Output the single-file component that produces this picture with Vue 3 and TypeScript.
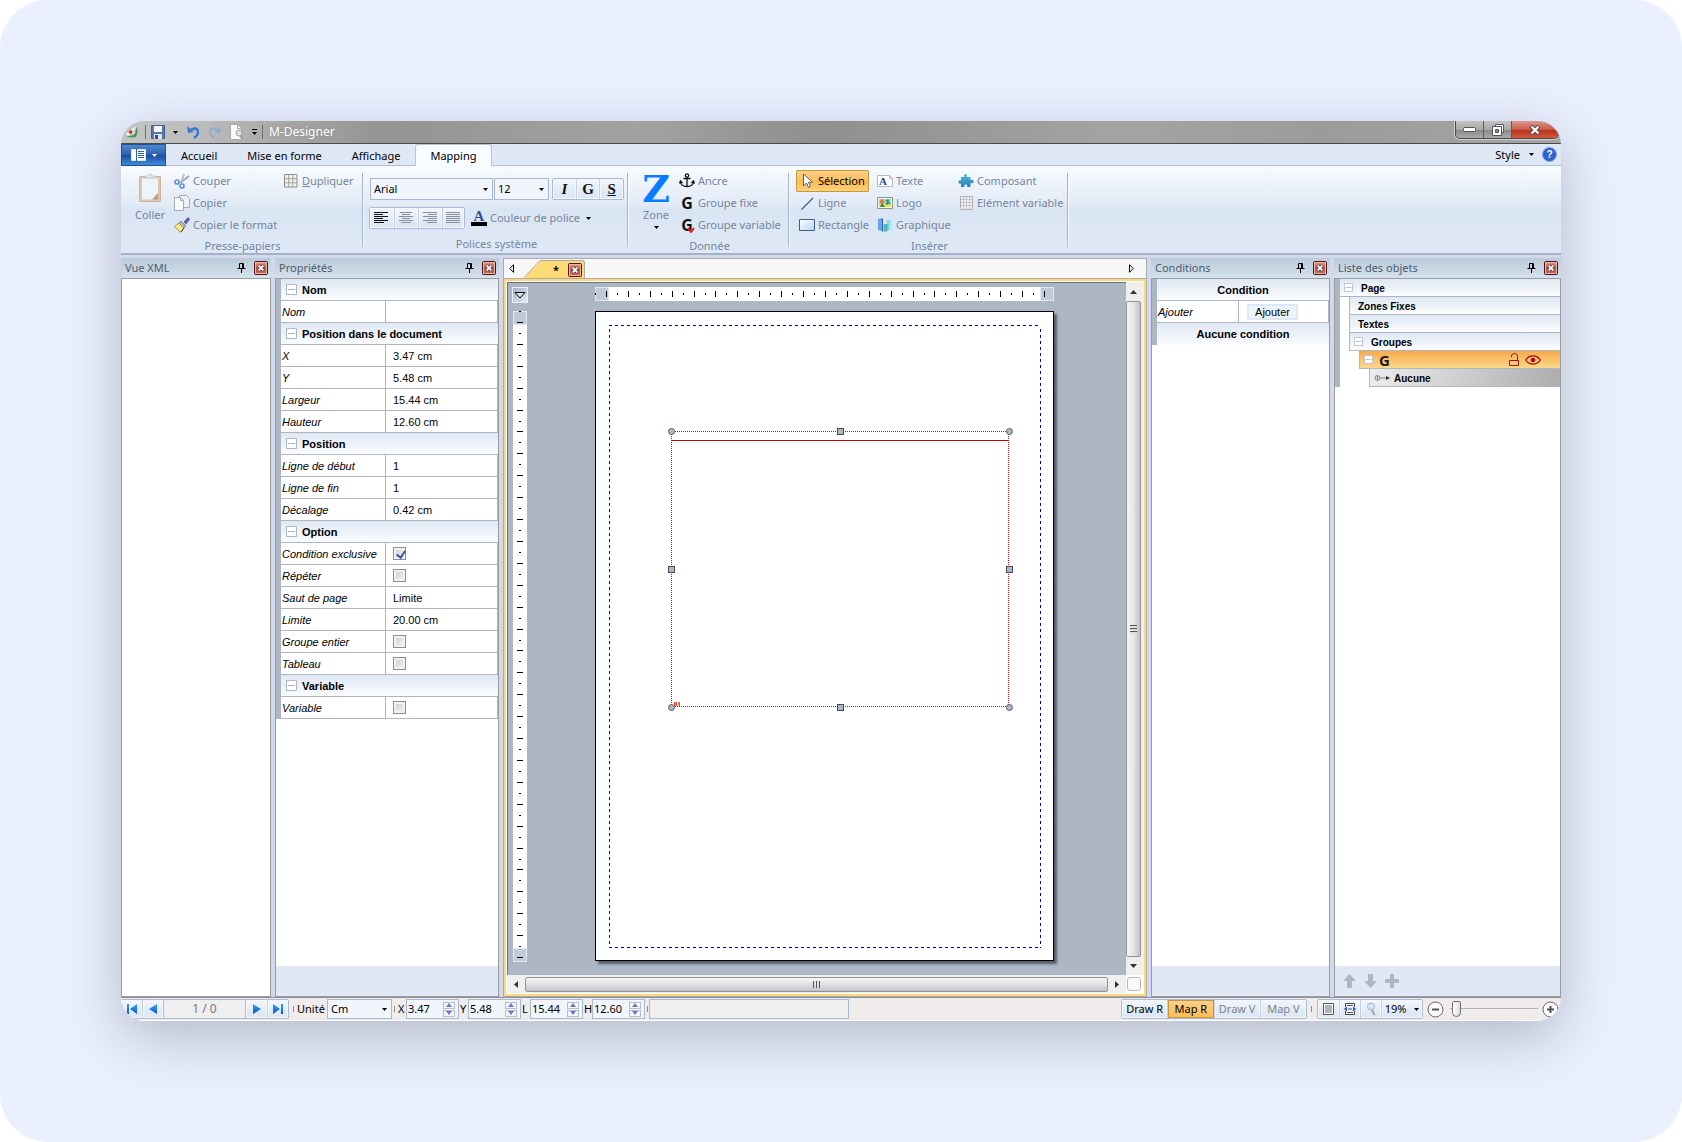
<script setup lang="ts">
import { ref } from 'vue'

interface RibbonItem { label: string; icon?: string; glyph?: string; active?: boolean; key?: boolean }
interface Row { kind: 'head' | 'text' | 'check' | 'select'; label: string; value?: string; checked?: boolean }

const tabs = ['Accueil', 'Mise en forme', 'Affichage', 'Mapping']
const activeTab = ref('Mapping')

const clipboard: RibbonItem[] = [
  { label: 'Couper', icon: 'cut' },
  { label: 'Copier', icon: 'copy' },
  { label: 'Copier le format', icon: 'brush' },
]
const data: RibbonItem[] = [
  { label: 'Ancre', icon: 'anchor' },
  { label: 'Groupe fixe', glyph: 'G' },
  { label: 'Groupe variable', glyph: 'G', key: true },
]
const insertColumns: RibbonItem[][] = [
  [
    { label: 'Sélection', icon: 'cursor', active: true },
    { label: 'Ligne', icon: 'line' },
    { label: 'Rectangle', icon: 'rect' },
  ],
  [
    { label: 'Texte', icon: 'text' },
    { label: 'Logo', icon: 'logo' },
    { label: 'Graphique', icon: 'chart' },
  ],
  [
    { label: 'Composant', icon: 'puzzle' },
    { label: 'Elément variable', icon: 'table' },
  ],
]
const aligns = ['left', 'center', 'right', 'justify']
const alignLines: Record<string, [number, number][]> = {
  left: [[0, 14], [0, 9], [0, 14], [0, 9], [0, 14], [0, 10]],
  center: [[1, 13], [3, 11], [0, 14], [3, 11], [0, 14], [2, 12]],
  right: [[0, 14], [5, 14], [0, 14], [5, 14], [0, 14], [4, 14]],
  justify: [[0, 14], [0, 14], [0, 14], [0, 14], [0, 14], [0, 14]],
}

const rows = ref<Row[]>([
  { kind: 'head', label: 'Nom' },
  { kind: 'text', label: 'Nom', value: '' },
  { kind: 'head', label: 'Position dans le document' },
  { kind: 'text', label: 'X', value: '3.47 cm' },
  { kind: 'text', label: 'Y', value: '5.48 cm' },
  { kind: 'text', label: 'Largeur', value: '15.44 cm' },
  { kind: 'text', label: 'Hauteur', value: '12.60 cm' },
  { kind: 'head', label: 'Position' },
  { kind: 'text', label: 'Ligne de début', value: '1' },
  { kind: 'text', label: 'Ligne de fin', value: '1' },
  { kind: 'text', label: 'Décalage', value: '0.42 cm' },
  { kind: 'head', label: 'Option' },
  { kind: 'check', label: 'Condition exclusive', checked: true },
  { kind: 'check', label: 'Répéter', checked: false },
  { kind: 'select', label: 'Saut de page', value: 'Limite' },
  { kind: 'text', label: 'Limite', value: '20.00 cm' },
  { kind: 'check', label: 'Groupe entier', checked: false },
  { kind: 'check', label: 'Tableau', checked: false },
  { kind: 'head', label: 'Variable' },
  { kind: 'check', label: 'Variable', checked: false },
])

const halfCm = 10.95
const ticks = (n: number) =>
  Array.from({ length: n }, (_, i) => ({ at: Math.round(i * halfCm), major: i % 2 === 1 }))
const hTicks = ticks(42)
const vTicks = ticks(60)

const coords = ref([
  { label: 'X', value: '3.47' },
  { label: 'Y', value: '5.48' },
  { label: 'L', value: '15.44' },
  { label: 'H', value: '12.60' },
])
const modes = ['Draw R', 'Map R', 'Draw V', 'Map V']
const mode = ref('Map R')
const corners = [[76, 120], [414, 120], [76, 396], [414, 396]]
const edges = [[245, 120], [245, 396], [76, 258], [414, 258]]
</script>

<template>
  <svg class="defs" aria-hidden="true">
    <defs>
      <linearGradient id="g-play" x1="0" y1="0" x2="0" y2="1"><stop offset="0" stop-color="#3aa0f5" /><stop offset="1" stop-color="#0a55c8" /></linearGradient>
      <linearGradient id="g-rect" x1="0" y1="0" x2="1" y2="1"><stop offset="0" stop-color="#fff" /><stop offset="1" stop-color="#b9d5ee" /></linearGradient>
      <linearGradient id="g-puz" x1="0" y1="0" x2="0" y2="1"><stop offset="0" stop-color="#56b9dc" /><stop offset="1" stop-color="#2a80b8" /></linearGradient>
      <linearGradient id="g-close" x1="0" y1="0" x2="0" y2="1"><stop offset="0" stop-color="#e4a595" /><stop offset=".5" stop-color="#c3503a" /><stop offset="1" stop-color="#c96a55" /></linearGradient>
    </defs>
    <symbol id="pin" viewBox="0 0 9 10"><path d="M2.500 .5h4v5h-4zM5.500 1v4.500M.5 5.500h8M4.500 6v4" fill="none" stroke="#000" /></symbol>
    <symbol id="close" viewBox="0 0 14 14">
      <rect x=".5" y=".5" width="13" height="13" rx="1" fill="url(#g-close)" stroke="#4f1220" />
      <rect x="1.500" y="1.500" width="11" height="11" fill="none" stroke="#eab5a6" />
      <path d="M4.500 4.500l5 5M9.500 4.500l-5 5" stroke="#4b4b58" stroke-width="3.600" /><path d="M4.700 4.700l4.600 4.600M9.300 4.700l-4.600 4.600" stroke="#fff" stroke-width="1.800" />
    </symbol>
    <symbol id="down" viewBox="0 0 5 3"><path d="M0 0h5L2.500 3z" fill="#000" /></symbol>
    <symbol id="minus" viewBox="0 0 11 11"><path d="M.5 .5h10v10h-10z" fill="#fff" stroke="#adb6c4" /><path d="M2 5.500h7" stroke="#adb6c4" /></symbol>
    <symbol id="cut" viewBox="0 0 16 16">
      <path d="M10 1L7 10M15 3L6 10" stroke="#9aa5b5" stroke-width="1.800" /><path d="M10 1L7.500 9" stroke="#d5dbe3" stroke-width=".7" />
      <circle cx="3" cy="9" r="2" fill="none" stroke="#6d93cf" stroke-width="1.700" /><circle cx="8" cy="13" r="2" fill="none" stroke="#6d93cf" stroke-width="1.700" />
    </symbol>
    <symbol id="copy" viewBox="0 0 16 16">
      <path d="M5.500 .5h7l3 3v9h-10z" fill="#eef0f2" stroke="#a5aab0" /><path d="M.5 2.500h6l3 3v10h-9z" fill="#f9fafb" stroke="#a5aab0" /><path d="M6.500 2.500v3h3" fill="none" stroke="#a5aab0" />
    </symbol>
    <symbol id="brush" viewBox="0 0 16 16">
      <path d="M10 5l4-4.500 1.700 1.700L12 7z" fill="#5964b8" stroke="#39406f" stroke-width=".6" /><path d="M7 4l5 5-2 2-5-5z" fill="#b5b8c0" stroke="#62656e" stroke-width=".7" />
      <path d="M5 6l5 5-3.500 4.500L.5 9.500z" fill="#f5e27a" stroke="#a58a2c" stroke-width=".8" /><path d="M2.500 9.500l5 4M4 8l4.500 4" stroke="#fff8cc" /><path d="M7 15l3-4" stroke="#4b3b12" />
    </symbol>
    <symbol id="grid" viewBox="0 0 14 14"><path d="M.5 .5h12.500v12.500h-12.500z" fill="#f3f2ee" stroke="#8d8d88" /><path d="M4.700 1v12M8.800 1v12M1 4.700h12M1 8.800h12" stroke="#a2a29c" /></symbol>
    <symbol id="anchor" viewBox="0 0 16 16"><circle cx="8" cy="2.500" r="1.700" fill="none" stroke="#111" stroke-width="1.200" /><path d="M8 4v10M4.500 5.500h7M1.500 9C2 12 5 13.500 8 13.500S14 12 14.500 9M.5 10.500l1-2.500 2 2M15.500 10.500l-1-2.500-2 2" fill="none" stroke="#111" stroke-width="1.300" /></symbol>
    <symbol id="cursor" viewBox="0 0 16 16"><path d="M4.500 1v12l3-3 2 4.500 2-1-2-4.200h4z" fill="#fff" stroke="#4f5e7c" /></symbol>
    <symbol id="line" viewBox="0 0 16 16"><path d="M2.500 14.500L14 3" stroke="#3d6089" stroke-width="1.300" /></symbol>
    <symbol id="rect" viewBox="0 0 16 16"><path d="M.5 2.500h15v11H.5z" fill="url(#g-rect)" stroke="#3d6089" /></symbol>
    <symbol id="textpage" viewBox="0 0 16 16"><path d="M.5 2.500h12l3 3v8H.5z" fill="#fdfdfd" stroke="#b5bac2" /><path d="M12.500 2.500v3h3" fill="none" stroke="#b5bac2" /></symbol>
    <symbol id="logo" viewBox="0 0 16 16">
      <path d="M.5 2.500h15v11H.5z" fill="#f4f4f0" stroke="#8f9490" /><path d="M2 4h12v8H2z" fill="#a3d0f3" /><path d="M2 12v-2l3-1 4 1 5-1v3z" fill="#f0e24c" />
      <circle cx="5" cy="6.500" r="2.300" fill="#e8792d" /><path d="M3 12l2-4 3 4z" fill="#2c8a32" /><path d="M9 5l4 4M12 5l-3 4M10.500 4.500v5" stroke="#3a9a3f" stroke-width="1.400" />
    </symbol>
    <symbol id="chart" viewBox="0 0 16 16">
      <path d="M1 2l4-1v13l-4-1z" fill="#6aa3ee" /><path d="M5 1l1 1v13l-1-1z" fill="#2a5fb8" /><path d="M6.500 7h3v7l-3 1z" fill="#45c3b0" /><path d="M9.500 7l1 .5V14l-1 .5z" fill="#17806f" /><path d="M10.500 3l4-1v11l-4 1z" fill="#9ae9f3" /><path d="M11 3v10" stroke="#4cbad0" />
    </symbol>
    <symbol id="puzzle" viewBox="0 0 16 16"><path d="M3 4h3.500C4.500 0 10.500 0 8.500 4H12.500v3C17 5.500 17 11.500 12.500 10v4H9C10.500 10.500 5 10.500 6.500 14H3v-3.500C-.5 12 -.5 6 3 7.500z" fill="url(#g-puz)" /></symbol>
    <symbol id="table" viewBox="0 0 16 16"><path d="M2.500 1.500h12v13h-12z" fill="#f5f4f6" stroke="#aeb0b8" /><path d="M5.500 2v12M8.500 2v12M11.500 2v12M3 4.500h11M3 7.500h11M3 10.500h11" stroke="#c6c2cc" /></symbol>
  </svg>

  <div class="stage">
    <main class="window">
      <header class="titlebar">
        <svg class="app-logo" width="20" height="22" viewBox="0 0 20 22"><path d="M3 13L14 4l2 2-9 11c-2 1-5 0-4-4z" fill="#e9efe9" stroke="#8ba592" stroke-width=".6" /><path d="M2 15c3 0 8 2 12-2l2-8c2 4 1 9-1 12-4 1-9 0-13-2z" fill="#3f9b62" /><path d="M5 12l6-5 3 5-4 2z" fill="#dfe8df" /><circle cx="9" cy="11" r="2.200" fill="#d8232e" /></svg>
        <i class="tsep"></i>
        <button class="quick save" aria-label="Enregistrer"><svg width="14" height="14" viewBox="0 0 14 14"><path d="M.5 .5h13v13H.5z" fill="#5878ad" stroke="#42608f" /><path d="M3 1h8v6H3z" fill="#f5f7fa" /><path d="M3 9h8v5H3z" fill="#dfe5ee" /><path d="M4 10h3v4H4z" fill="#36507c" /></svg></button>
        <button class="quick" aria-label="Options"><svg width="5" height="3"><use href="#down" /></svg></button>
        <button class="quick" aria-label="Annuler"><svg width="14" height="14" viewBox="0 0 14 14"><path d="M1 1l1 7 6-1z" fill="#3c76d2" /><path d="M4 6c3-4 8-3 8 1 0 2-1 4-4 6" fill="none" stroke="#3c76d2" stroke-width="2.400" /></svg></button>
        <button class="quick" aria-label="Rétablir"><svg width="14" height="14" viewBox="0 0 14 14"><path d="M13 1l-1 7-6-1z" fill="#93abcb" /><path d="M10 6C7 2 2 3 2 7c0 2 1 4 4 6" fill="none" stroke="#93abcb" stroke-width="2.200" /></svg></button>
        <button class="quick" aria-label="Aperçu"><svg width="14" height="16" viewBox="0 0 14 16"><path d="M.5 .5h7l4 4v11H.5z" fill="#fafafa" stroke="#aaa" /><path d="M7.500 .5v4h4" fill="none" stroke="#aaa" /><circle cx="9" cy="9" r="3" fill="#d9e2ea" stroke="#9aa3ab" /><path d="M10 12l3 3" stroke="#9aa3ab" stroke-width="2" /></svg></button>
        <button class="quick last" aria-label="Personnaliser"><svg width="5" height="7" viewBox="0 0 5 7"><path d="M0 .5h5" stroke="#000" /><path d="M0 3h5L2.500 6z" fill="#000" /></svg></button>
        <i class="tsep"></i>
        <h1>M-Designer</h1>
        <div class="winctl">
          <button aria-label="Réduire"><svg width="13" height="6" viewBox="0 0 13 6"><rect x=".5" y=".5" width="12" height="4" rx="1" fill="#fff" stroke="#50555c" /></svg></button>
          <button aria-label="Restaurer"><svg width="12" height="12" viewBox="0 0 12 12"><path d="M3.500 .5h8v8h-2v-6h-6z" fill="#fff" stroke="#50555c" /><path d="M.5 2.500h9v9h-9z" fill="#fff" stroke="#50555c" /><path d="M3.500 5.500h3v3h-3z" fill="#888" stroke="#50555c" /></svg></button>
          <button class="x" aria-label="Fermer"><svg width="12" height="10" viewBox="0 0 12 10"><path d="M2 1l8 8M10 1L2 9" stroke="#5a3a45" stroke-width="4" /><path d="M2.500 1.500l7 7M9.500 1.500l-7 7" stroke="#fff" stroke-width="2.300" /></svg></button>
        </div>
      </header>

      <nav class="tabs">
        <button class="menu" aria-label="Menu"><svg width="15" height="12" viewBox="0 0 15 12"><path d="M.5 .5h14v11H.5z" fill="#fff" stroke="#dce8f8" /><path d="M5.500 0v12" stroke="#2a60b0" /><path d="M7 2.500h6M7 4.500h6M7 6.500h6M7 8.500h6" stroke="#2a60b0" /></svg><svg width="5" height="3"><use href="#down" /></svg></button>
        <button v-for="t in tabs" :key="t" class="tab" :class="{ on: t === activeTab }" @click="activeTab = t">{{ t }}</button>
        <button class="style">Style<svg width="5" height="3"><use href="#down" /></svg></button>
        <button class="help" aria-label="Aide"><span>?</span></button>
      </nav>

      <section class="ribbon">
        <div class="group g-clip">
          <div class="body">
            <button class="big"><svg width="24" height="30" viewBox="0 0 24 30"><path d="M1.500 3.500h21v25h-21z" fill="#dcc6b6" stroke="#cdb3a0" /><path d="M4 5.500h16v17l-4 4H4z" fill="#eef4fa" /><path d="M20 20v6.500h-6z" fill="#c39a80" /><path d="M7 5V3h3c0-3 4-3 4 0h3v2z" fill="#e4eaf0" stroke="#b6bec8" stroke-width=".6" /></svg><span>Coller</span></button>
            <div class="col c109"><button v-for="i in clipboard" :key="i.label" class="item"><svg width="16" height="16"><use :href="'#' + i.icon" /></svg>{{ i.label }}</button></div>
            <div class="col"><button class="item"><span class="cell"><svg width="14" height="14"><use href="#grid" /></svg></span><span><u>D</u>upliquer</span></button></div>
          </div>
          <h2>Presse-papiers</h2>
        </div>
        <div class="group g-font">
          <div class="fontrows">
            <div class="frow">
              <span class="combo w124"><select aria-label="Police"><option>Arial</option></select><svg width="5" height="3"><use href="#down" /></svg></span>
              <span class="combo w55"><select aria-label="Taille"><option>12</option></select><svg width="5" height="3"><use href="#down" /></svg></span>
              <span class="seg igs"><button><i>I</i></button><button><b>G</b></button><button><u>S</u></button></span>
            </div>
            <div class="frow">
              <span class="seg al"><button v-for="a in aligns" :key="a" :aria-label="a"><svg width="14" height="12" viewBox="0 0 14 12"><path v-for="(l, n) in alignLines[a]" :key="n" :d="`M${l[0]} ${n * 2 + .5}H${l[1]}`" :stroke="a === 'left' ? '#111' : '#8b8e96'" /></svg></button></span>
              <button class="fcolor"><span class="fa">A</span>Couleur de police<svg width="5" height="3"><use href="#down" /></svg></button>
            </div>
          </div>
          <h2>Polices système</h2>
        </div>
        <div class="group g-data">
          <div class="body">
            <button class="big zone"><span class="z">Z</span><span>Zone</span><svg width="5" height="3"><use href="#down" /></svg></button>
            <div class="col"><button v-for="i in data" :key="i.label" class="item"><svg v-if="i.icon" width="16" height="16"><use :href="'#' + i.icon" /></svg><span v-else class="cell gl">{{ i.glyph }}<svg v-if="i.key" class="chk" width="8" height="6" viewBox="0 0 8 6"><path d="M1 1l3 4 3-4" fill="none" stroke="#f01818" stroke-width="2" /></svg></span>{{ i.label }}</button></div>
          </div>
          <h2>Donnée</h2>
        </div>
        <div class="group g-ins">
          <div class="body">
            <div v-for="(c, n) in insertColumns" :key="n" class="col">
              <button v-for="i in c" :key="i.label" class="item" :class="{ on: i.active }">
                <span v-if="i.icon === 'text'" class="cell pg"><svg width="16" height="16"><use href="#textpage" /></svg><b>A</b></span>
                <svg v-else width="16" height="16"><use :href="'#' + i.icon" /></svg>{{ i.label }}</button>
            </div>
          </div>
          <h2>Insérer</h2>
        </div>
      </section>

      <section class="work">
        <aside class="panel p-xml">
          <header><h3>Vue XML</h3><button aria-label="Épingler"><svg width="9" height="10"><use href="#pin" /></svg></button><button aria-label="Fermer"><svg width="14" height="14"><use href="#close" /></svg></button></header>
          <div class="content"></div>
        </aside>

        <aside class="panel p-prop">
          <header><h3>Propriétés</h3><button aria-label="Épingler"><svg width="9" height="10"><use href="#pin" /></svg></button><button aria-label="Fermer"><svg width="14" height="14"><use href="#close" /></svg></button></header>
          <div class="content">
            <table class="props">
              <colgroup><col class="c-name"><col></colgroup>
              <tbody>
                <tr v-for="(r, n) in rows" :key="n">
                  <th v-if="r.kind === 'head'" colspan="2"><div class="hd"><button aria-label="Réduire la section"><svg width="11" height="11"><use href="#minus" /></svg></button>{{ r.label }}</div></th>
                  <template v-else>
                    <td class="nm"><label :for="'p' + n">{{ r.label }}</label></td>
                    <td class="vl">
                      <input v-if="r.kind === 'check'" :id="'p' + n" v-model="r.checked" type="checkbox">
                      <select v-else-if="r.kind === 'select'" :id="'p' + n"><option>{{ r.value }}</option></select>
                      <input v-else :id="'p' + n" v-model="r.value" type="text">
                    </td>
                  </template>
                </tr>
              </tbody>
            </table>
            <footer></footer>
          </div>
        </aside>

        <section class="doc">
          <div class="doctabs">
            <button aria-label="Précédent"><svg width="5" height="9" viewBox="0 0 5 9"><path d="M4.500 .7v7.600L.7 4.500z" fill="none" stroke="#000" /></svg></button>
            <div class="doctab"><svg class="slope" width="18" height="18" viewBox="0 0 18 18"><path d="M0 18L16 1h2v17z" fill="#ffdb78" /><path d="M0 17.500L16 .5h2" fill="none" stroke="#aaa" /></svg><span>*</span><button aria-label="Fermer"><svg width="14" height="14"><use href="#close" /></svg></button></div>
            <button class="next" aria-label="Suivant"><svg width="5" height="9" viewBox="0 0 5 9"><path d="M.5 .7v7.600L4.300 4.500z" fill="none" stroke="#000" /></svg></button>
          </div>
          <div class="frame">
            <div class="canvas">
              <button class="corner" aria-label="Règles"><svg width="12" height="7" viewBox="0 0 12 7"><path d="M1 .5h10L6 6z" fill="#dfe3e6" stroke="#000" /></svg></button>
              <svg class="hruler" width="459" height="14"><path d="M0 0h459v14H0z" fill="#fff" /><path d="M.5 .5h13v13H.5zM445.500 .5h13v13h-13z" fill="#c0cad8" stroke="#dfe9f6" /><path v-for="t in hTicks" :key="t.at" :d="t.major ? `M${t.at + .5} 4v6` : `M${t.at + .5} 6v2`" stroke="#000" /></svg>
              <svg class="vruler" width="14" height="651"><path d="M0 0h14v651H0z" fill="#fff" /><path d="M.5 .5h13v13H.5zM.5 637.500h13v13H.5z" fill="#c0cad8" stroke="#dfe9f6" /><path v-for="t in vTicks" :key="t.at" :d="t.major ? `M4 ${t.at + .5}h6` : `M6 ${t.at + .5}h2`" stroke="#000" /></svg>
              <svg class="page" width="459" height="650">
                <rect x=".5" y=".5" width="458" height="649" fill="#fff" stroke="#000" />
                <path d="M14 14.500H446M14 636.500H446M14.500 18V637M445.500 18V637" stroke="#0000c0" stroke-dasharray="3 3" />
                <path d="M76 120.500H414M76 395.500H414M76.500 121V396M413.500 121V396" stroke="#f00000" stroke-dasharray="1 1" />
                <path d="M77 129.500h336" stroke="#c80000" />
                <circle v-for="(c, n) in corners" :key="'c' + n" :cx="c[0] + .5" :cy="c[1] + .5" r="3" fill="#adb6c3" stroke="#58606c" />
                <rect v-for="(c, n) in edges" :key="'e' + n" :x="c[0] - 2.500" :y="c[1] - 2.500" width="6" height="6" fill="#adb6c3" stroke="#434d5a" />
                <path d="M79.500 391v4M81.500 391v4M84.500 391v4" stroke="#f33" /><path d="M80.500 391v4M83.500 391v4" stroke="#fb8" />
              </svg>
            </div>
            <div class="vbar"><button aria-label="Haut"><svg width="7" height="4" viewBox="0 0 7 4"><path d="M0 4h7L3.500 0z" fill="#333" /></svg></button><div class="thumb"><i></i><i></i><i></i></div><button aria-label="Bas"><svg width="7" height="4" viewBox="0 0 7 4"><path d="M0 0h7L3.500 4z" fill="#333" /></svg></button></div>
            <div class="hbar"><button aria-label="Gauche"><svg width="4" height="7" viewBox="0 0 4 7"><path d="M4 0v7L0 3.500z" fill="#333" /></svg></button><div class="thumb"><i></i><i></i><i></i></div><button aria-label="Droite"><svg width="4" height="7" viewBox="0 0 4 7"><path d="M0 0v7l4-3.500z" fill="#333" /></svg></button></div>
            <div class="nub"><button aria-label="Zoom"></button></div>
          </div>
        </section>

        <aside class="panel p-cond">
          <header><h3>Conditions</h3><button aria-label="Épingler"><svg width="9" height="10"><use href="#pin" /></svg></button><button aria-label="Fermer"><svg width="14" height="14"><use href="#close" /></svg></button></header>
          <div class="content">
            <table class="props">
              <colgroup><col class="c-cond"><col></colgroup>
              <tbody>
                <tr><th colspan="2" class="mid">Condition</th></tr>
                <tr><td class="nm">Ajouter</td><td class="vl"><button class="add">Ajouter</button></td></tr>
                <tr class="nb"><th colspan="2" class="mid">Aucune condition</th></tr>
              </tbody>
            </table>
            <footer></footer>
          </div>
        </aside>

        <aside class="panel p-list">
          <header><h3>Liste des objets</h3><button aria-label="Épingler"><svg width="9" height="10"><use href="#pin" /></svg></button><button aria-label="Fermer"><svg width="14" height="14"><use href="#close" /></svg></button></header>
          <div class="content">
            <div class="tree">
              <div class="node top"><svg width="9" height="9"><use href="#minus" /></svg><span>Page</span></div>
              <div class="node l1"><span>Zones Fixes</span></div>
              <div class="node l1"><span>Textes</span></div>
              <div class="node l1 par"><svg width="9" height="9"><use href="#minus" /></svg><span>Groupes</span></div>
              <div class="node l2"><svg width="9" height="9"><use href="#minus" /></svg><b class="gg">G</b>
                <button aria-label="Verrou"><svg width="10" height="13" viewBox="0 0 10 13"><path d="M.5 7.500h9v5h-9zM8.500 7V3C8.500-.2 2.500-.2 2.500 3v1" fill="none" stroke="#a01010" /></svg></button>
                <button aria-label="Visible"><svg width="16" height="10" viewBox="0 0 16 10"><path d="M.8 5C4-.5 12-.5 15.200 5 12 10.500 4 10.500 .8 5z" fill="none" stroke="#a01010" stroke-width="1.300" /><circle cx="8" cy="5" r="2.300" fill="#a01010" /></svg></button>
              </div>
              <div class="node l3"><svg width="16" height="8" viewBox="0 0 16 8"><circle cx="3.500" cy="4" r="2.500" fill="#ddd" stroke="#888" /><path d="M3.500 2v4M6 4h7" stroke="#888" /><path d="M12 2l4 2-4 2z" fill="#333" /></svg><span>Aucune</span></div>
            </div>
            <footer>
              <button aria-label="Monter"><svg width="13" height="14" viewBox="0 0 13 14"><path d="M6.500 0L13 7H9v7H4V7H0z" fill="#adb6c3" /></svg></button>
              <button aria-label="Descendre"><svg width="13" height="14" viewBox="0 0 13 14"><path d="M6.500 14L13 7H9V0H4v7H0z" fill="#adb6c3" /></svg></button>
              <button aria-label="Ajouter un objet"><svg width="14" height="14" viewBox="0 0 14 14"><path d="M5 0h4v5h5v4H9v5H5V9H0V5h5z" fill="#adb6c3" /></svg></button>
            </footer>
          </div>
        </aside>
      </section>

      <footer class="status">
        <div class="seg nav">
          <button aria-label="Première"><svg width="10" height="10" viewBox="0 0 10 10"><path d="M10 0v10L3 5zM0 0h2v10H0z" fill="url(#g-play)" /></svg></button>
          <button aria-label="Page précédente"><svg width="8" height="10" viewBox="0 0 8 10"><path d="M8 0v10L0 5z" fill="url(#g-play)" /></svg></button>
          <output>1 / 0</output>
          <button aria-label="Page suivante"><svg width="8" height="10" viewBox="0 0 8 10"><path d="M0 0v10l8-5z" fill="url(#g-play)" /></svg></button>
          <button aria-label="Dernière"><svg width="10" height="10" viewBox="0 0 10 10"><path d="M0 0v10l7-5zM8 0h2v10H8z" fill="url(#g-play)" /></svg></button>
        </div>
        <i class="ssep"></i>
        <label for="unit">Unité</label>
        <span class="combo unit"><select id="unit"><option>Cm</option></select><svg width="5" height="3"><use href="#down" /></svg></span>
        <i class="ssep"></i>
        <template v-for="c in coords" :key="c.label">
          <label class="cl" :for="'c' + c.label">{{ c.label }}</label>
          <span class="spin"><input :id="'c' + c.label" v-model="c.value" type="text"><span><button aria-label="Plus"><svg width="6" height="4" viewBox="0 0 6 4"><path d="M0 4h6L3 0z" fill="#6a78c8" /></svg></button><button aria-label="Moins"><svg width="6" height="4" viewBox="0 0 6 4"><path d="M0 0h6L3 4z" fill="#6a78c8" /></svg></button></span></span>
        </template>
        <i class="ssep"></i>
        <div class="progress"></div>
        <div class="seg modes"><button v-for="m in modes" :key="m" :class="{ on: m === mode, off: m.endsWith('V') }" @click="mode = m">{{ m }}</button></div>
        <i class="ssep"></i>
        <div class="seg views">
          <button aria-label="Page"><svg width="11" height="12" viewBox="0 0 11 12"><path d="M.5 .5h10v11H.5z" fill="#fff" stroke="#555" /><path d="M2 3h7M2 5h7M2 7h7M2 9h7" stroke="#666" /></svg></button>
          <button aria-label="Largeur"><svg width="12" height="12" viewBox="0 0 12 12"><path d="M1.500 4V.5h9V4M1.500 8v3.500h9V8" fill="#fff" stroke="#444" /><path d="M3 2.500h6M3 9.500h6M4 6h4" stroke="#555" /><path d="M0 6l3-2.500v5zM12 6L9 3.500v5z" fill="#2458d0" /></svg></button>
          <button aria-label="Loupe"><svg width="10" height="14" viewBox="0 0 10 14"><circle cx="5" cy="4.500" r="3.500" fill="#d3e6f8" stroke="#9db6d4" /><path d="M6 8l2.500 5" stroke="#a3a3b3" stroke-width="2" /></svg></button>
          <button class="pct">19%<svg width="5" height="3"><use href="#down" /></svg></button>
        </div>
        <button class="rnd" aria-label="Zoom arrière"><svg width="17" height="17" viewBox="0 0 17 17"><circle cx="8.500" cy="8.500" r="7.500" fill="#fbfbfb" stroke="#666" /><path d="M5 8.500h7" stroke="#555" stroke-width="2" /></svg></button>
        <input class="zoom" type="range" min="0" max="100" value="2" aria-label="Zoom">
        <button class="rnd" aria-label="Zoom avant"><svg width="17" height="17" viewBox="0 0 17 17"><circle cx="8.500" cy="8.500" r="7.500" fill="#fbfbfb" stroke="#666" /><path d="M5 8.500h7M8.500 5v7" stroke="#555" stroke-width="2" /></svg></button>
      </footer>
    </main>
  </div>
</template>

<style>
body { background: #fff; }
</style>

<style scoped>
* { box-sizing: border-box; }
.defs { position: absolute; width: 0; height: 0; }
button, input, select { font: inherit; color: inherit; margin: 0; padding: 0; border: 0; background: none; border-radius: 0; outline: 0; }
select { appearance: none; }
h1, h2, h3 { margin: 0; font-weight: 400; }
svg { flex: none; display: block; }

.stage { min-height: 100vh; padding: 121px; display: flex; background: #ebf0ff; border-radius: 48px; font: 11px/16px "Noto Sans", "Open Sans", sans-serif; color: #000; }
.window { flex: 1; min-width: 0; display: flex; flex-direction: column; border-radius: 24px; overflow: hidden; background: #d3d9ec; box-shadow: 0 16px 56px rgba(50, 55, 80, .3); }

.titlebar { height: 23px; display: flex; align-items: center; background: linear-gradient(90deg, #c4c4c4 0, #bcbcbc 80px, #a8a8a8 160px, #949494 260px, #a2a2a2 520px, #8f8f8f 700px, #a4a4a4 1000px, #9b9b9b 1200px, #a5a5a5 100%); border-bottom: 1px solid #4a4a4e; }
.app-logo { margin-left: 2px; width: 17px; }
.tsep { width: 1px; height: 14px; margin-left: 5px; background: #6d6d6d; }
.quick { margin-left: 8px; }
.quick.save { margin-left: 5px; }
.tsep + h1 { margin-left: 6px; }
h1 { color: #fff; font-size: 12px; line-height: 18px; flex: 1; text-shadow: 0 0 4px #8a8a8a; }
.winctl { display: flex; align-self: flex-start; height: 18px; margin-right: 2px; border: 1px solid #48484c; border-top: 0; border-radius: 0 0 5px 5px; overflow: hidden; box-shadow: 0 0 0 1px #d3d3d3; }
.winctl button { width: 28px; display: flex; align-items: center; justify-content: center; background: linear-gradient(#c2c2c2, #a9a9a9 50%, #868686 50%, #a9a9a9); border-right: 1px solid #5b5b5f; }
.winctl button.x { width: 46px; border: 0; background: linear-gradient(#dc9a8c, #c9594a 50%, #b3301a 50%, #d05a40); }

.tabs { height: 22px; display: flex; background: #dfe8f5; border-bottom: 1px solid #b0c0d8; }
.menu { width: 45px; height: 22px; display: flex; align-items: center; justify-content: center; gap: 6px; background: linear-gradient(#4f86cc, #2a5fb0 50%, #1b4c9c 50%, #3f8bd8); border: 1px solid #234f94; }
.menu svg + svg { filter: invert(1); }
.tab { padding: 1px 14px 0; height: 22px; border: 1px solid transparent; border-bottom: 0; }
.tab.on { background: #f8fbff; border-color: #b4c3da; border-radius: 3px 3px 0 0; }
.style { margin-left: auto; display: flex; align-items: center; gap: 9px; }
.help { margin: 0 5px 0 9px; display: flex; align-items: center; }
.help span { width: 13px; height: 13px; border-radius: 50%; background: #2b62d0; box-shadow: 0 0 0 1px #7e9fd8; color: #fff; font: bold 10px/13px "Liberation Sans", sans-serif; }

.ribbon { height: 89px; display: flex; background: linear-gradient(#f8fbff, #e1eaf6 45%, #dae5f4 50%, #dfe9f6); border-bottom: 2px solid #a5b1c5; color: #76859c; }
.group { position: relative; display: flex; flex-direction: column; padding-top: 4px; }
.group::after { content: ""; position: absolute; right: 0; top: 7px; bottom: 6px; width: 2px; background: linear-gradient(90deg, #a3b4cc 50%, #f6faff 50%); }
.g-clip { width: 243px; }
.g-font { width: 265px; }
.g-data { width: 161px; }
.g-ins { width: 279px; }
.group h2 { text-align: center; font-size: 11px; line-height: 19px; }
.body { height: 66px; display: flex; }
.col { display: flex; flex-direction: column; }
.c109 { width: 109px; }
.g-ins .body { padding-left: 6px; }
.g-ins .col:nth-child(1) { width: 78px; }
.g-ins .col:nth-child(2) { width: 81px; }
.item { height: 22px; padding: 0 4px 0 3px; display: flex; align-items: center; gap: 3px; white-space: nowrap; align-self: flex-start; }
.item.on { color: #000; background: linear-gradient(#fbd08c, #fdbf5c 50%, #fdb94f 50%, #fed47f); box-shadow: inset 0 0 0 1px #c29b3c; border-radius: 2px; }
.cell { width: 16px; height: 16px; display: flex; align-items: center; justify-content: center; position: relative; }
.gl { font: bold 16px/16px "Noto Sans", sans-serif; color: #111; }
.chk { position: absolute; right: 0; bottom: 0; }
.pg b { position: absolute; left: 2px; top: 2px; font: bold 11px/12px "Liberation Serif", serif; color: #2345a0; }
.big { width: 42px; margin-left: 8px; padding-top: 3px; display: flex; flex-direction: column; align-items: center; gap: 4px; }
.zone { width: 40px; margin-left: 7px; gap: 3px; }
.z { font: bold 38px/31px "DejaVu Serif", serif; color: #0a7dff; }
.fontrows { height: 66px; padding: 8px 0 0 6px; display: flex; flex-direction: column; gap: 7px; }
.frow { display: flex; align-items: center; }
.combo { height: 22px; display: flex; align-items: center; background: #f2f6fc; border: 1px solid #a6bad8; color: #000; padding: 0 4px 0 3px; }
.combo select { flex: 1; min-width: 0; }
.w124 { width: 123px; margin-right: 1px; }
.w55 { width: 55px; margin-right: 3px; }
.seg { display: flex; height: 22px; border: 1px solid #a9bbd6; border-radius: 2px; background: linear-gradient(#f5f8fc, #e3ecf7 50%, #dbe6f4); }
.seg button { flex: 1; display: flex; align-items: center; justify-content: center; box-shadow: inset 0 0 0 1px #f3f7fc; }
.seg button + button { border-left: 1px solid #c3d0e2; }
.igs { width: 72px; color: #111; font: bold 15px/16px "Liberation Serif", serif; }
.al { width: 96px; margin-left: -1px; }
.seg.al button { flex: 0 0 24px; padding-right: 2px; }
.seg.al button:last-child { flex: 1; }
.fcolor { display: flex; align-items: center; gap: 3px; margin-left: 6px; white-space: nowrap; }
.fcolor svg { margin-left: 3px; }
.fa { width: 16px; border-bottom: 4px solid #000; font: bold 15px/12px "Liberation Serif", serif; color: #34508c; }

.work { flex: 1; min-height: 0; display: flex; gap: 4px; padding-top: 3px; }
.panel { display: flex; flex-direction: column; }
.p-xml { width: 150px; }
.p-prop { width: 224px; }
.p-cond { width: 179px; }
.p-list { width: 227px; }
.panel > header { height: 20px; padding: 0 3px 0 4px; display: flex; align-items: center; gap: 8px; background: linear-gradient(#bccbd9, #d4e1ef); color: #4d5a68; }
h3 { flex: 1; font-size: 11px; line-height: 20px; }
.content { flex: 1; display: flex; flex-direction: column; background: #fff; border: 1px solid #9c9c9f; font-family: "Liberation Sans", Arial, sans-serif; font-size: 11px; line-height: 14px; color: #000; }
.content footer { height: 30px; margin-top: auto; background: #dfe8f4; display: flex; align-items: center; gap: 8px; padding-left: 8px; }
.props { width: 100%; border-collapse: separate; border-spacing: 0; border-left: 5px solid #adb6c3; table-layout: fixed; }
.c-name { width: 105px; }
.c-cond { width: 82px; }
.props th { height: 22px; padding: 0; text-align: left; background: linear-gradient(#dfe8f4, #fbfcfe); border-bottom: 1px solid #adb6c3; }
.props th.mid { text-align: center; }
.props .nb th { border-bottom: 0; }
.hd { display: flex; align-items: center; gap: 5px; padding-left: 5px; }
.props td { height: 22px; padding: 0; border-bottom: 1px solid #adb6c3; border-right: 1px solid #adb6c3; vertical-align: middle; }
.props td.nm { padding-left: 1px; font-style: italic; white-space: nowrap; }
.props td.vl { padding-left: 7px; }
.vl input[type=text], .vl select { display: block; width: 100%; height: 16px; padding-top: 1px; }
.vl input[type=checkbox] { appearance: none; display: block; width: 13px; height: 13px; border: 1px solid #8c8f94; background: linear-gradient(135deg, #c6cbd2, #f6f6f6); box-shadow: inset 0 0 0 2px #f1f1f1; position: relative; }
.vl input[type=checkbox]:checked::after { content: ""; position: absolute; left: 4px; top: 1px; width: 4px; height: 7px; border: solid #3c56a0; border-width: 0 2px 2px 0; transform: rotate(35deg); }
.add { margin-left: 1px; width: 51px; height: 16px; background: #eef4fc; border: 2px solid #dfe8f5; line-height: 12px; display: block; }

.tree { border-left: 5px solid #adb6c3; font: bold 10px/15px "Liberation Sans", Arial, sans-serif; }
.node { height: 18px; display: flex; align-items: center; gap: 8px; padding-left: 4px; background: linear-gradient(#dfe8f4, #fbfcfe); border-bottom: 1px solid #adb6c3; border-left: 1px solid #adb6c3; }
.node span { padding-top: 2px; }
.top { border-left: 0; }
.l1 { margin-left: 9px; padding-left: 8px; }
.l1.par { padding-left: 4px; }
.l2 { margin-left: 19px; gap: 6px; padding-right: 19px; background: linear-gradient(#f8a94a, #fad98c); }
.l2 .gg { flex: 1; font: bold 15px/16px "Noto Sans", sans-serif; color: #181818; }
.l3 { margin-left: 29px; gap: 4px; background: linear-gradient(90deg, #ececec, #adadad); }

.doc { flex: 1; min-width: 0; display: flex; flex-direction: column; border: 1px solid #a9abb0; }
.doctabs { height: 20px; display: flex; align-items: center; background: #f7f7f7; border-bottom: 1px solid #aaa; padding: 0 12px 0 5px; }
.doctab { align-self: flex-end; height: 18px; margin-left: 10px; display: flex; align-items: center; background: #ffdb78; border-top: 1px solid #aaa; border-right: 1px solid #aaa; border-radius: 0 3px 0 0; padding-right: 2px; }
.doctab span { margin: 0 9px 0 11px; width: 6px; font-weight: 700; }
.slope { background: #f7f7f7; margin-top: -1px; }
.next { margin-left: auto; }
.frame { flex: 1; min-height: 0; display: grid; grid-template-columns: 1fr 18px; grid-template-rows: 1fr 18px; border: 2px solid #ffd878; background: #fff; padding: 1px 0 1px 1px; }
.canvas { min-width: 0; display: grid; grid-template-columns: 16px 1fr; grid-template-rows: 16px 1fr; row-gap: 8px; align-content: start; padding: 4px 5px 0 4px; background: #adb6c3; border-left: 1px solid #707278; border-top: 1px solid #707278; overflow: hidden; }
.corner { background: linear-gradient(135deg, #a4b0c2, #e2eaf5); border: 1px solid #e6eef8; display: flex; align-items: center; justify-content: center; }
.hruler { justify-self: center; align-self: start; }
.vruler { justify-self: center; }
.page { justify-self: center; overflow: visible; filter: drop-shadow(3px 3px 1px rgba(30, 36, 48, .6)); }
.vbar, .hbar { display: flex; align-items: center; background: #efefef; }
.vbar { flex-direction: column; padding: 1px 3px 0 0; }
.hbar { padding: 2px 0; }
.vbar button { height: 18px; width: 100%; display: flex; align-items: center; justify-content: center; }
.hbar button { width: 18px; display: flex; justify-content: center; }
.thumb { flex: 1; display: flex; align-items: center; justify-content: center; gap: 1px; border: 1px solid #909296; border-radius: 2px; }
.vbar .thumb { width: 15px; flex-direction: column; background: linear-gradient(90deg, #f6f6f6, #e6e6e8 50%, #c2c2c6); }
.hbar .thumb { height: 15px; background: linear-gradient(#f6f6f6, #e0e0e2 50%, #c4c4c8); }
.vbar i { width: 7px; height: 2px; background: #555; border-bottom: 1px solid #ddd; }
.hbar i { height: 7px; width: 2px; background: #555; border-right: 1px solid #ddd; }
.nub { padding: 2px 2px 2px 1px; background: #fff; }
.nub button { width: 14px; height: 14px; display: block; border: 1px solid #b5b8bb; border-radius: 3px; background: #fafafa; }

.status { height: 24px; padding: 1px 2px 1px 0; display: flex; align-items: center; background: #f0ecec; border-top: 1px solid #8c8c92; border-bottom: 1px solid #fff; white-space: nowrap; }
.status .seg { height: 20px; }
.status .nav { width: 168px; border-left: 0; }
.nav button { flex: 0 0 21px; }
.nav output { flex: 1; text-align: center; font-size: 12px; line-height: 18px; color: #77787c; background: #efeff0; border: solid #a9bbd6; border-width: 0 1px; }
.ssep { width: 1px; height: 6px; margin: 0 4px; background: #8c8c8c; }
.nav + .ssep { margin-right: 3px; }
.status label { width: 29px; }
.status .unit { width: 65px; height: 20px; margin-left: 1px; }
.unit + .ssep { margin: 0 3px 0 2px; }
.status .cl { width: 8px; }
.spin { width: 53px; height: 20px; margin-right: 1px; display: flex; align-items: center; background: #f2f6fc; border: 1px solid #a6bad8; padding: 0 3px 0 1px; }
.spin input { flex: 1; min-width: 0; width: 0; }
.spin span { display: flex; flex-direction: column; gap: 1px; }
.spin button { width: 12px; height: 7px; border: 1px solid #b9bcc4; display: flex; align-items: center; justify-content: center; }
.spin + .ssep { margin: 0 1px; }
.progress { width: 200px; height: 20px; background: #efefef; border: 1px solid #a6bad8; }
.modes { width: 186px; margin-left: auto; }
.modes .on { background: linear-gradient(#fbd08c, #fdbb52); box-shadow: inset 0 0 0 1px #c29b3c; }
.modes .off { color: #7b828d; }
.modes + .ssep { margin-right: 5px; }
.views { width: 106px; }
.views button { flex: 0 0 21px; }
.views .pct { flex: 1; gap: 8px; }
.rnd { margin-left: 4px; }
.zoom { appearance: none; width: 88px; height: 18px; margin-left: 6px; background: linear-gradient(#b2b2b6, #b2b2b6) 0 8px / 100% 1px no-repeat; }
.zoom::-webkit-slider-thumb { appearance: none; width: 9px; height: 16px; border: 1px solid #6d6f73; border-radius: 2px 2px 5px 5px; background: linear-gradient(90deg, #fff, #dcdcdc); }
</style>
